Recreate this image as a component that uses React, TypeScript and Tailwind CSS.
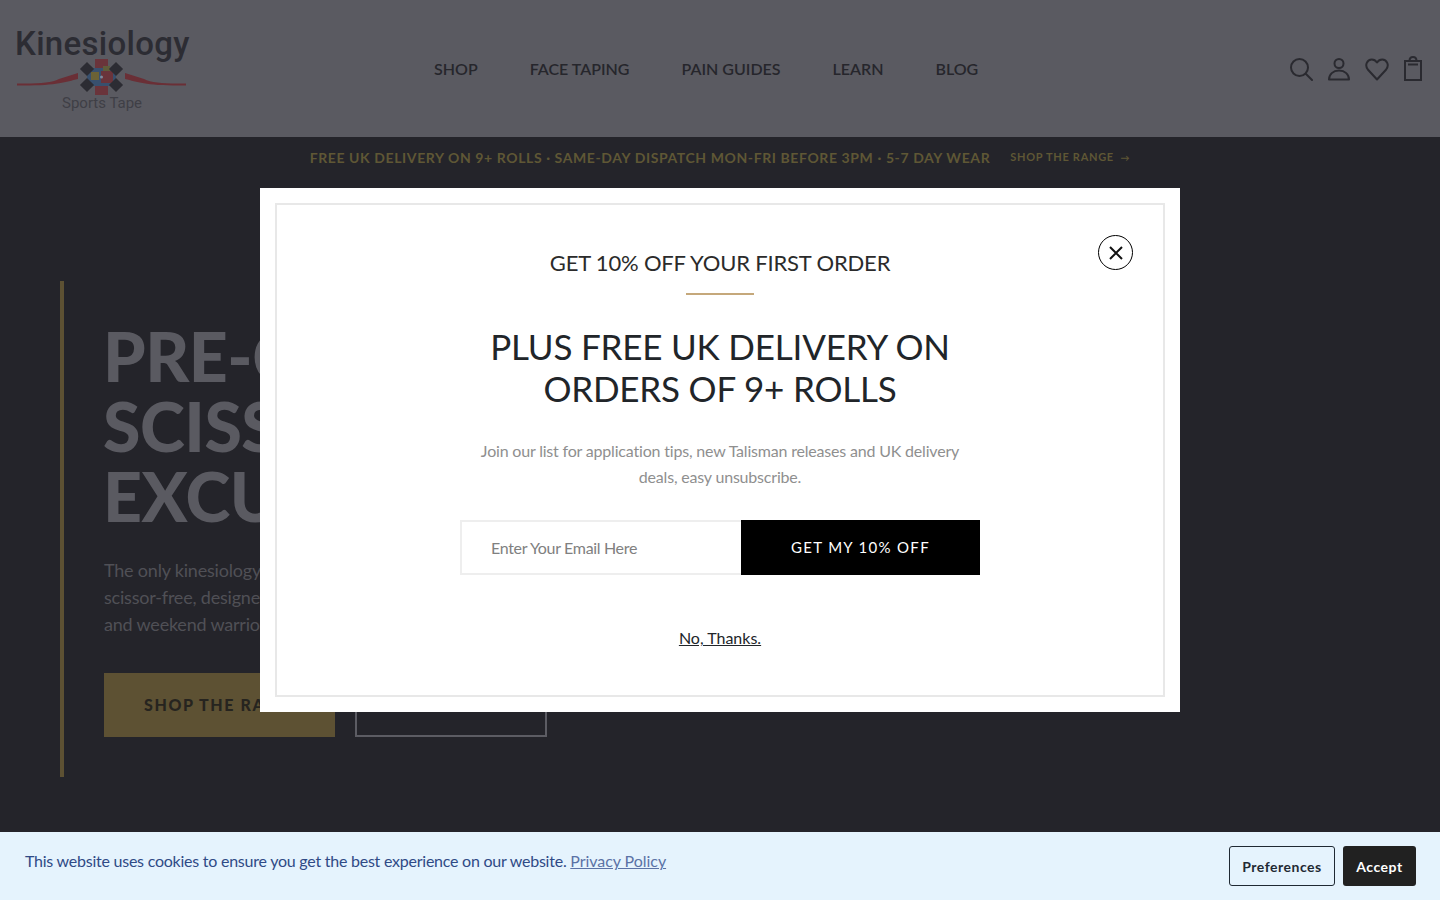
import React from 'react';

function Logo() {
  return (
    <div className="relative w-[175px] h-[86px] shrink-0">
      <div className="font-['Roboto',sans-serif] font-medium text-[33px] leading-[36px] tracking-[0.3px] text-[#2c2c33] whitespace-nowrap">
        Kinesiology
      </div>
      <svg className="absolute left-0 top-[30px]" width="175" height="40" viewBox="0 0 175 40">
        <path d="M2 27.500 C22 28 36 27 44 23 L63 17 L63 23 C50 26 42 30 2 29.500Z" fill="#6a2f36" />
        <path d="M171 27.500 C151 28 137 27 129 23 L110 17 L110 23 C123 26 131 30 171 29.500Z" fill="#6a2f36" />
        <rect x="80" y="3" width="13" height="10" fill="#6a343b" />
        <rect x="80" y="29" width="13" height="10" fill="#6a343b" />
        <rect x="72" y="12" width="29" height="18" fill="#38506e" />
        <rect x="86" y="15" width="12" height="12" fill="#6a343b" />
        <rect x="76" y="16" width="8" height="8" fill="#6b6236" />
        <rect x="88" y="10" width="7" height="5" fill="#5f5c3a" />
        <circle cx="86.500" cy="21" r="1.500" fill="#7d8a9c" />
        <g fill="#2c2c33">
          <rect x="67" y="8" width="10" height="10" transform="rotate(45 72 13)" />
          <rect x="96" y="8" width="10" height="10" transform="rotate(45 101 13)" />
          <rect x="67" y="24" width="10" height="10" transform="rotate(45 72 29)" />
          <rect x="96" y="24" width="10" height="10" transform="rotate(45 101 29)" />
        </g>
      </svg>
      <div className="absolute left-[47px] top-[67px] font-['Roboto',sans-serif] text-[15px] leading-[20px] text-[#3f3f46] whitespace-nowrap">
        Sports Tape
      </div>
    </div>
  );
}

function HeaderIcons() {
  return (
    <div className="ml-auto flex items-center gap-[14px] text-[#2a2a30]">
      <svg width="24" height="24" viewBox="0 0 24 24" fill="none" stroke="currentColor" strokeWidth="2">
        <circle cx="10.500" cy="10.500" r="8.500" />
        <path d="M17 17l6 6" strokeLinecap="round" />
      </svg>
      <svg width="24" height="24" viewBox="0 0 24 24" fill="none" stroke="currentColor" strokeWidth="2">
        <circle cx="12" cy="6.500" r="4.500" />
        <path d="M2 22.500c0-5 4-9 10-9s10 4 10 9z" strokeLinejoin="round" />
      </svg>
      <svg width="24" height="24" viewBox="0 0 24 24" fill="none" stroke="currentColor" strokeWidth="2">
        <path d="M12 22.500 2.800 12.500C-.6 8 2.200 2.500 6.800 2.500c2.400 0 4 1.200 5.200 3 1.200-1.800 2.800-3 5.200-3 4.600 0 7.400 5.500 4 10z" strokeLinejoin="round" />
      </svg>
      <svg width="20" height="26" viewBox="0 0 20 26" fill="none" stroke="currentColor" strokeWidth="2">
        <rect x="2" y="5" width="16" height="19" />
        <path d="M6.500 5c0-2.500 1.500-4 3.500-4s3.500 1.500 3.500 4z" />
        <path d="M5 8.500h10" />
      </svg>
    </div>
  );
}

export default function App() {
  return (
    <div className="relative h-screen overflow-hidden bg-[#24242a] font-['Lato',sans-serif]">
      {/* dimmed page */}
      <header className="flex items-center h-[137px] pl-[15px] pr-[17px] bg-[#5a5a61]">
        <Logo />
        <nav className="ml-[244px] flex gap-[52px] text-[16px] font-semibold text-[#26262c] whitespace-nowrap">
          <span>SHOP</span>
          <span>FACE TAPING</span>
          <span>PAIN GUIDES</span>
          <span>LEARN</span>
          <span>BLOG</span>
        </nav>
        <HeaderIcons />
      </header>

      <div className="flex items-center justify-center gap-[20px] h-[41px] text-[#5f5735] font-bold whitespace-nowrap">
        <span className="text-[14px] tracking-[0.6px]">
          FREE UK DELIVERY ON 9+ ROLLS · SAME-DAY DISPATCH MON-FRI BEFORE 3PM · 5-7 DAY WEAR
        </span>
        <span className="text-[11px] tracking-[0.7px]">SHOP THE RANGE &nbsp;<span className="text-[9px]">→</span></span>
      </div>

      <section className="ml-[60px] mt-[103px] h-[496px] border-l-4 border-[#5d5133] pl-[40px] pt-[40px]">
        <h1 className="-ml-[1px] text-[68px] leading-[70px] tracking-[-0.5px] font-black text-[#5a5a61] whitespace-nowrap">
          PRE-CUT.
          <br />
          SCISSOR-FREE.
          <br />
          EXCUSE-FREE.
        </h1>
        <p className="mt-[26px] text-[18px] leading-[27px] tracking-[-0.2px] text-[#505056] whitespace-nowrap">
          The only kinesiology tape that is pre-cut and
          <br />
          scissor-free, designed for athletes
          <br />
          and weekend warriors.
        </p>
        <div className="mt-[35px] flex gap-[20px]">
          <div className="flex items-center pl-[40px] w-[231px] h-[64px] bg-[#5d5133] text-[16px] font-black tracking-[1.6px] text-[#26241f] whitespace-nowrap">
            SHOP THE RANGE
          </div>
          <div className="w-[192px] h-[64px] border-2 border-[#5c5c63]" />
        </div>
      </section>

      {/* signup popup */}
      <div className="absolute inset-0 flex items-center justify-center">
        <div className="w-[920px] h-[524px] bg-white p-[15px]">
          <div className="relative h-full border-2 border-[#e8e8e8] flex flex-col items-center pt-[42px] text-center">
            <button className="absolute right-[30px] top-[30px] w-[35px] h-[35px] rounded-full border border-black flex items-center justify-center">
              <svg width="16" height="16" viewBox="0 0 16 16" fill="none" stroke="#111" strokeWidth="2">
                <path d="M2 2l12 12M14 2 2 14" />
              </svg>
            </button>
            <div className="text-[22px] leading-[32px] tracking-[-0.17px] text-[#2b2b2b]">GET 10% OFF YOUR FIRST ORDER</div>
            <div className="mt-[14px] w-[68px] h-[2px] bg-[#c5a87b]" />
            <h2 className="mt-[30px] text-[35px] leading-[42px] tracking-[-0.2px] text-[#212529]">
              PLUS FREE UK DELIVERY ON
              <br />
              ORDERS OF 9+ ROLLS
            </h2>
            <p className="mt-[29px] w-[500px] text-[16px] leading-[26px] tracking-[-0.19px] text-[#8f8f8f]">
              Join our list for application tips, new Talisman releases and UK delivery deals, easy unsubscribe.
            </p>
            <div className="mt-[30px] flex w-[520px] h-[55px]">
              <div className="w-[281px] border-2 border-r-0 border-[#eeeeee] flex items-center pl-[29px] text-[16px] tracking-[-0.33px] text-[#808080]">
                Enter Your Email Here
              </div>
              <div className="flex-1 bg-black text-white flex items-center justify-center text-[15px] tracking-[1.3px]">
                GET MY 10% OFF
              </div>
            </div>
            <a className="mt-[51px] text-[16px] leading-[24px] text-[#212529] underline">No, Thanks.</a>
          </div>
        </div>
      </div>

      {/* cookie bar */}
      <div className="absolute left-0 right-0 bottom-0 h-[68px] bg-[#e5f3fd] flex items-start pl-[25px] pr-[24px]">
        <p className="mt-[17px] text-[16px] leading-[24px] tracking-[-0.24px] text-[#2f4a86]">
          This website uses cookies to ensure you get the best experience on our website.{' '}
          <a className="text-[#5b72a6] underline tracking-[-0.05px]">Privacy Policy</a>
        </p>
        <div className="ml-auto mt-[14px] flex gap-[8px]">
          <button className="w-[106px] h-[40px] rounded-[3px] border border-[#1f2933] text-[14px] font-bold tracking-[0.5px] text-[#1f2933]">
            Preferences
          </button>
          <button className="w-[73px] h-[40px] rounded-[3px] bg-[#212121] text-[14px] font-bold tracking-[0.5px] text-white">
            Accept
          </button>
        </div>
      </div>
    </div>
  );
}
